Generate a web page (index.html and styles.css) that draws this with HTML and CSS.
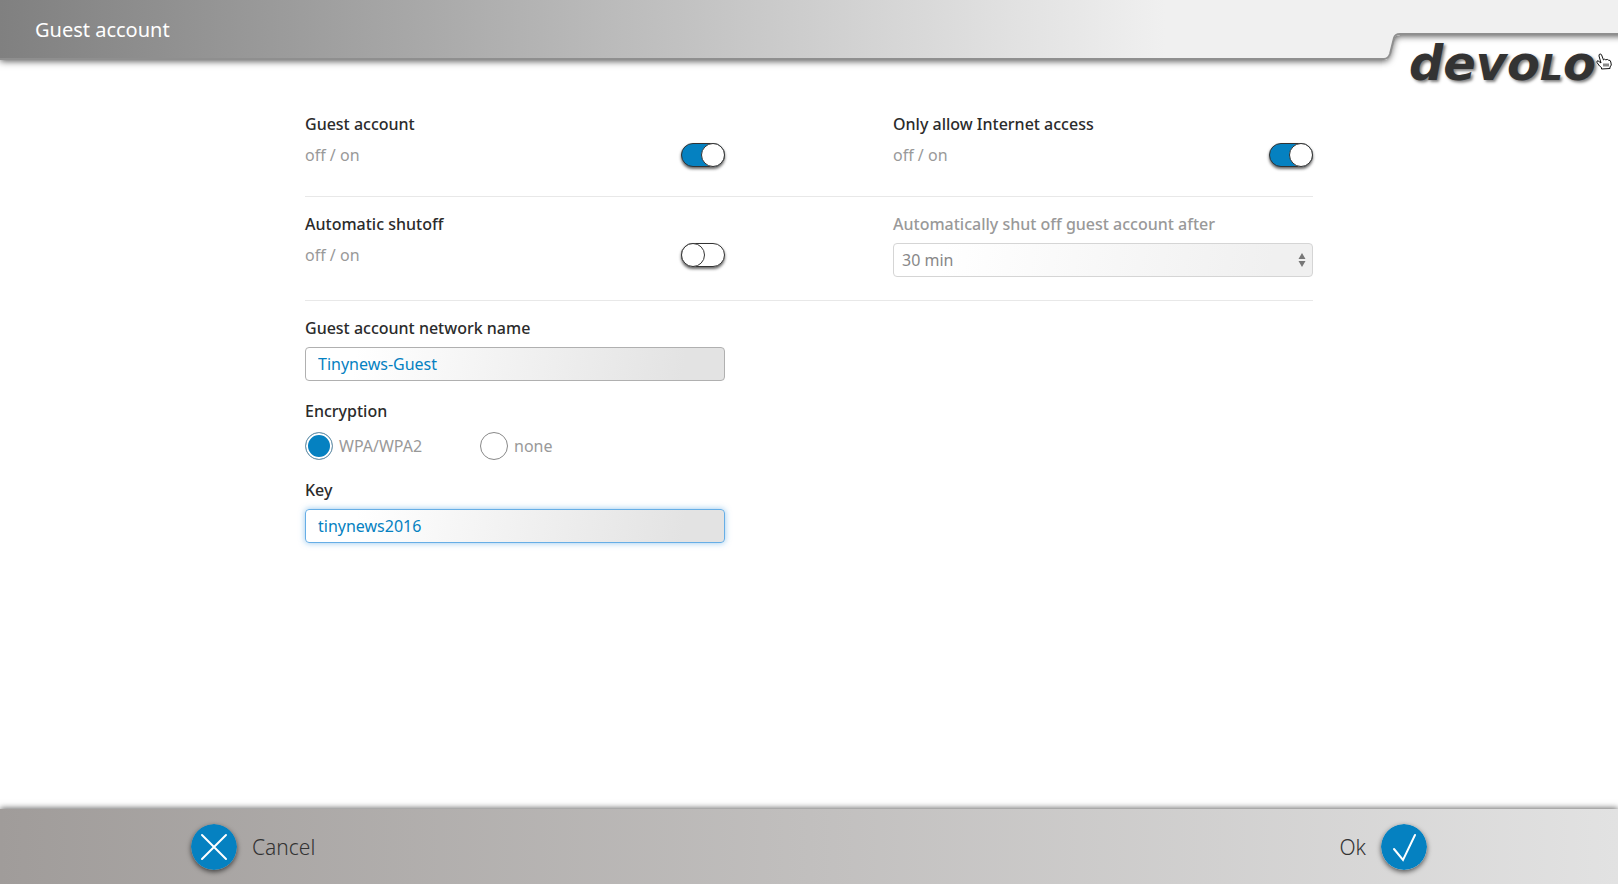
FILE: index.html
```html
<!DOCTYPE html>
<html lang="en">

<head>
    <meta charset="UTF-8">
    <meta name="viewport" content="width=device-width, initial-scale=1.0">
    <title>Guest account</title>
    <link rel="stylesheet" href="styles.css">
</head>

<body>
    <header class="header">
        <h1>Guest account</h1>
        <svg class="header-tab" width="236" height="48" viewBox="0 0 236 48" aria-hidden="true">
            <defs>
                <filter id="tabShadow" x="-10%" y="-20%" width="120%" height="160%">
                    <feDropShadow dx="0" dy="1" stdDeviation="3.500" flood-color="#000" flood-opacity="0.7" />
                </filter>
            </defs>
            <path d="M-20 -20H256V9H18Q13 9 12 13L8 29Q6 34 2 34H-20Z" fill="#f0f0f0" filter="url(#tabShadow)" />
            <path d="M0 33H2Q6 33 8 28L12 12Q13 8 18 8H236" fill="none" stroke="#8f8f8f" stroke-width="2" />
        </svg>
        <a class="logo" href="#">devo<span class="logo-cap">l</span>o</a>
        <svg class="hand" width="16" height="18" viewBox="0 0 16 18" aria-hidden="true">
            <path d="M5.500 16V14.500L3.500 13L1 9.500Q.5 7.500 2 7.800L5 10L3 3Q2.800 1 4.200 1T6 3L7.500 7Q8.500 5.500 9.800 6.800Q11.500 5.800 12.500 7.200Q14.500 6.800 14.800 9L15.300 12L14 14V15.500Z" fill="#fff" stroke="#111" />
            <path d="M8 10.500V13.500M10 10.500V13.500M12 10.500V13.500" stroke="#111" />
        </svg>
    </header>

    <main>
        <form class="settings" id="guestForm">
            <div class="row">
                <div class="field">
                    <label class="title" for="guest">Guest account</label>
                    <div class="switch-line">
                        <span>off / on</span>
                        <input class="switch" type="checkbox" id="guest" checked>
                    </div>
                </div>
                <div class="field">
                    <label class="title" for="internet">Only allow Internet access</label>
                    <div class="switch-line">
                        <span>off / on</span>
                        <input class="switch" type="checkbox" id="internet" checked>
                    </div>
                </div>
            </div>

            <div class="row">
                <div class="field">
                    <label class="title" for="shutoff">Automatic shutoff</label>
                    <div class="switch-line">
                        <span>off / on</span>
                        <input class="switch" type="checkbox" id="shutoff">
                    </div>
                </div>
                <div class="field disabled">
                    <label class="title" for="after">Automatically shut off guest account after</label>
                    <div class="select-wrap">
                        <select id="after" disabled>
                            <option>30 min</option>
                        </select>
                        <svg class="arrows" width="8" height="14" viewBox="0 0 8 14" aria-hidden="true">
                            <path d="M4 0L7.500 6H.5ZM4 14L7.500 8H.5Z" fill="#777" />
                        </svg>
                    </div>
                </div>
            </div>

            <div class="row">
                <div class="stack">
                    <div class="field">
                        <label class="title" for="ssid">Guest account network name</label>
                        <input class="text" type="text" id="ssid" value="Tinynews-Guest">
                    </div>
                    <fieldset class="field">
                        <legend class="title">Encryption</legend>
                        <div class="radios">
                            <label><input type="radio" name="encryption" checked>WPA/WPA2</label>
                            <label><input type="radio" name="encryption">none</label>
                        </div>
                    </fieldset>
                    <div class="field">
                        <label class="title" for="key">Key</label>
                        <input class="text active" type="text" id="key" value="tinynews2016">
                    </div>
                </div>
            </div>
        </form>
    </main>

    <footer class="footer">
        <div class="actions">
            <button type="reset" form="guestForm">
                <svg class="round" width="46" height="46" viewBox="0 0 46 46" aria-hidden="true">
                    <circle cx="23" cy="23" r="23" fill="#0581c1" />
                    <path d="M11 11L35 35M35 11L11 35" stroke="#fff" stroke-width="2" stroke-linecap="round" />
                </svg>
                Cancel
            </button>
            <button type="submit" form="guestForm">
                Ok
                <svg class="round" width="46" height="46" viewBox="0 0 46 46" aria-hidden="true">
                    <circle cx="23" cy="23" r="23" fill="#0581c1" />
                    <path d="M13 25L22 36L34 11" fill="none" stroke="#fff" stroke-width="2" stroke-linecap="round" />
                </svg>
            </button>
        </div>
    </footer>
</body>

</html>
```

FILE: styles.css
```css
:root {
    --blue: #0581c1;
    --text: #2b2b2b;
    --muted: #999;
}

*,
*::before {
    box-sizing: border-box;
    margin: 0;
    padding: 0;
}

body {
    font-family: 'Noto Sans', sans-serif;
    font-size: 16px;
    line-height: 24px;
    color: var(--text);
    background-color: #fff;
    display: flex;
    flex-direction: column;
    min-height: 100vh;
}

input,
select,
button {
    font: inherit;
    appearance: none;
}

.header {
    position: relative;
    height: 60px;
    padding: 0 35px;
    display: flex;
    align-items: center;
    background: linear-gradient(to right, #808080, #f0f0f0 72%);
    border-bottom: 2px solid #8f8f8f;
    box-shadow: 0 1px 7px rgba(0, 0, 0, 0.7);
}

.header h1 {
    font-size: 20px;
    font-weight: 400;
    line-height: 28px;
    padding-top: 2px;
    color: #fff;
}

/* white tab that cuts into the header behind the logo */
.header-tab {
    position: absolute;
    right: 0;
    top: 26px;
    background-color: #fff;
}

.logo {
    position: absolute;
    right: 22px;
    top: 39px;
    font-family: 'DejaVu Sans', sans-serif;
    font-size: 48px;
    font-weight: 700;
    font-style: italic;
    line-height: 48px;
    color: #333;
    text-decoration: none;
    text-shadow: 2px 2px 3px rgba(0, 0, 0, 0.5);
}

.logo-cap {
    font-size: 36px;
    text-transform: uppercase;
}

.hand {
    position: absolute;
    right: 6px;
    top: 53px;
}

main {
    flex-grow: 1;
    padding: 52px 24px 24px;
}

.settings {
    max-width: 1008px;
    margin: 0 auto;
}

.row {
    display: grid;
    grid-template-columns: 5fr 2fr 5fr;
    padding: 15px 0 23px;
    border-bottom: 1px solid #e8e8e8;
}

.row:first-child {
    padding-top: 0;
}

.row:last-child {
    border-bottom: none;
}

.row > :last-child:not(:first-child) {
    grid-column: 3;
}

.field {
    border: none;
}

.title {
    display: block;
    font-weight: 500;
    margin-bottom: 7px;
}

.switch-line {
    display: flex;
    justify-content: space-between;
    align-items: center;
    padding-bottom: 6px;
    color: var(--muted);
}

.switch {
    width: 44px;
    height: 24px;
    border: 1px solid #333;
    border-radius: 12px;
    background-color: #fff;
    box-shadow: 0 2px 3px rgba(0, 0, 0, 0.6);
    display: flex;
    cursor: pointer;
}

.switch::before {
    content: '';
    width: 24px;
    height: 24px;
    margin: -1px;
    border: 1px solid #333;
    border-radius: 50%;
    background-color: #fff;
}

.switch:checked {
    background-color: var(--blue);
    justify-content: flex-end;
}

.disabled .title {
    color: var(--muted);
}

.text,
select {
    display: block;
    width: 100%;
    height: 34px;
    padding: 0 12px 1px;
    border: 1px solid #b0b0b0;
    border-radius: 4px;
    background: linear-gradient(100deg, #fff 12%, #e3e3e3 90%);
    color: var(--blue);
    outline: none;
}

select {
    padding: 0 8px 1px;
    border-color: #d5d5d5;
    background: linear-gradient(100deg, #fff 12%, #f0f0f0 90%);
    color: #888;
    opacity: 1;
}

.select-wrap {
    position: relative;
}

.arrows {
    position: absolute;
    right: 7px;
    top: 10px;
}

.text.active,
.text:focus {
    border-color: #66aee6;
    box-shadow: 0 0 6px rgba(102, 174, 230, 0.7);
}

.stack {
    display: grid;
    gap: 18px;
}

.radios {
    display: grid;
    grid-template-columns: 175px 1fr;
    padding-top: 2px;
}

.radios label {
    display: flex;
    align-items: center;
    gap: 6px;
    color: var(--muted);
}

.radios input {
    width: 28px;
    height: 28px;
    border: 1px solid #888;
    border-radius: 50%;
    background-color: #fff;
}

.radios input:checked {
    border-color: #7b97a8;
    background-color: var(--blue);
    box-shadow: inset 0 0 0 2px #fff;
}

.footer {
    background: linear-gradient(to right, #a09c9a, #e2e2e2);
    box-shadow: 0 -1px 6px rgba(0, 0, 0, 0.6);
    padding: 0 24px;
}

.actions {
    max-width: 1236px;
    height: 75px;
    margin: 0 auto;
    display: flex;
    justify-content: space-between;
    align-items: center;
}

.footer button {
    display: flex;
    align-items: center;
    gap: 15px;
    border: none;
    background: none;
    font-size: 21px;
    font-weight: 300;
    color: #333;
    cursor: pointer;
}

.round {
    border-radius: 50%;
    box-shadow: 0 2px 5px rgba(0, 0, 0, 0.6);
}
```
